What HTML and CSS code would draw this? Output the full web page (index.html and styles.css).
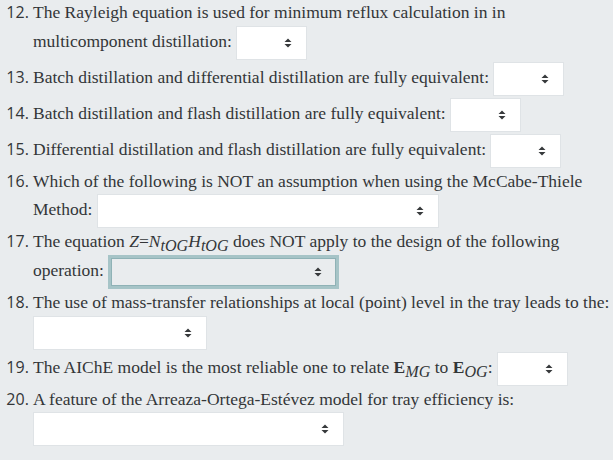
FILE: index.html
```html
<!DOCTYPE html>
<html lang="en">
<head>
  <meta charset="UTF-8" />
  <meta name="viewport" content="width=device-width, initial-scale=1.0"/>
  <title>Distillation quiz</title>
  <link rel="stylesheet" href="styles.css">
</head>
<body>
  <ol class="quiz" start="12">
    <li>The Rayleigh equation is used for minimum reflux calculation in in multicomponent distillation: <select class="answer short"></select></li>
    <li>Batch distillation and differential distillation are fully equivalent: <select class="answer short"></select></li>
    <li>Batch distillation and flash distillation are fully equivalent: <select class="answer short"></select></li>
    <li>Differential distillation and flash distillation are fully equivalent: <select class="answer short"></select></li>
    <li>Which of the following is NOT an assumption when using the McCabe-Thiele Method: <select class="answer wide"></select></li>
    <li>The equation <span class="math"><i>Z</i>=<i>N</i><sub>tOG</sub><i>H</i><sub>tOG</sub></span> does NOT apply to the design of the following operation: <select class="answer medium focused"></select></li>
    <li>The use of mass-transfer relationships at local (point) level in the tray leads to the: <select class="answer small"></select></li>
    <li>The AIChE model is the most reliable one to relate <span class="math"><b>E</b><sub>MG</sub></span> to <span class="math"><b>E</b><sub>OG</sub></span>: <select class="answer short"></select></li>
    <li>A feature of the Arreaza-Ortega-Est&eacute;vez model for tray efficiency is: <select class="answer large"></select></li>
  </ol>
</body>
</html>
```

FILE: styles.css
```css
body {
  margin: 0;
  background: #e9ecee;
  color: #333638;
  font-family: 'Liberation Serif', serif;
  font-size: 17.5px;
}

.quiz {
  margin: 0;
  padding: 0 0 0 33px;
  line-height: 24.5px;
}

.quiz li::marker {
  font-family: 'Open Sans', sans-serif;
  font-size: 16px;
}

.math i,
.math sub {
  font-style: italic;
}

.math sub {
  font-size: 92%;
  vertical-align: -4px;
  line-height: 1;
}

.answer {
  appearance: none;
  -webkit-appearance: none;
  height: 34px;
  margin: 1px 0;
  vertical-align: middle;
  background: #fff url("data:image/svg+xml,%3Csvg xmlns='http://www.w3.org/2000/svg' width='8' height='10'%3E%3Cpath d='M4 0.5L7.5 4H0.5zM4 9.5L0.5 6H7.5z' fill='%23373a3c'/%3E%3C/svg%3E") no-repeat right 14px center;
  border: 1px solid #dfe3e6;
  border-radius: 0;
}

.short { width: 71px; }
.small { width: 174px; }
.medium { width: 231px; }
.large { width: 311px; }
.wide { width: 342px; }

.focused {
  background-color: #e9ecee;
  border: 3px solid #a6c4c7;
  box-shadow: inset 0 0 0 1px #8fb2b6;
}
```
